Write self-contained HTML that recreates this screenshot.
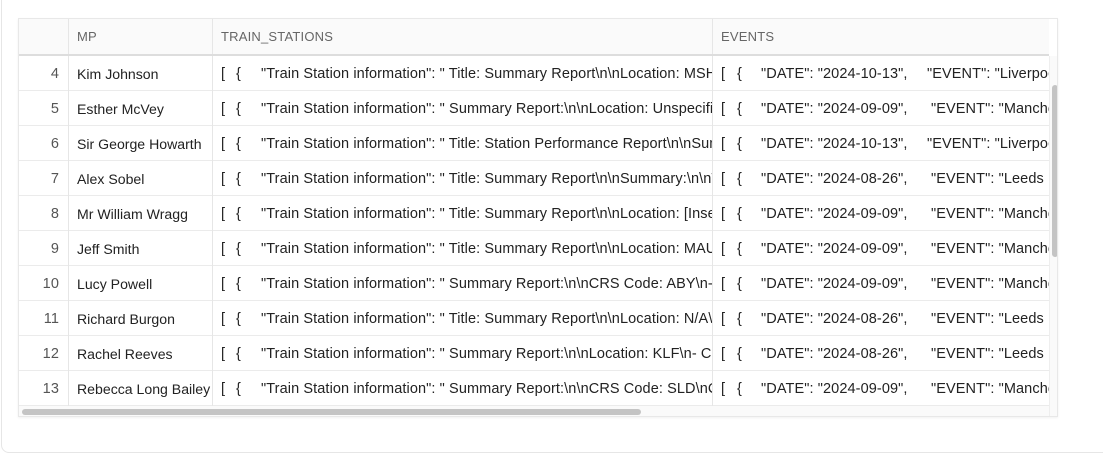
<!DOCTYPE html>
<html><head><meta charset="utf-8"><style>
*{margin:0;padding:0;box-sizing:border-box}
body{width:1103px;height:455px;background:#fff;position:relative;overflow:hidden;font-family:"Liberation Sans",Arial,sans-serif;font-size:14.5px;letter-spacing:0.1px;color:#222}
.outer{position:absolute;left:1px;top:-10px;width:1110px;height:463px;border:1px solid #e6e6e6;border-radius:8px}
.tbl{position:absolute;left:18px;top:18px;width:1040px;height:399px;border:1px solid #e8e8e8;box-shadow:0 1px 2px rgba(0,0,0,.06);overflow:hidden;background:#fff}
.hdr{position:absolute;left:0;top:0;width:1030px;height:37px;background:#fafafa;border-bottom:2px solid #ddd;color:#666;font-size:13px;letter-spacing:0.2px}
.hdr div{position:absolute;top:0;height:35px;line-height:36px;border-right:1px solid #e6e6e6;padding-left:8px}
.row{position:absolute;left:0;width:1030px;height:35px;border-bottom:1px solid #ebebeb;line-height:37px;white-space:nowrap}
.c{position:absolute;top:0;height:35px;overflow:hidden;border-right:1px solid #e6e6e6}
.i{left:0;width:50px;text-align:right;padding-right:9px;color:#555}
.m{left:50px;width:144px;padding-left:8px;letter-spacing:0;font-size:14.1px}
.t{left:194px;width:500px}
.e{left:694px;width:336px;border-right:none}
.s{position:absolute;top:0}
.hs{position:absolute;left:0;top:387px;width:1030px;height:11px;background:#fafafa}
.hs div{position:absolute;left:3px;top:3px;width:619px;height:6px;border-radius:3px;background:#c4c4c4}
.vs{position:absolute;left:1030px;top:37px;width:10px;height:362px;background:#fafafa;border-left:1px solid #eee}
.vs div{position:absolute;left:2px;top:29px;width:6px;height:172px;border-radius:3px;background:#c4c4c4}
</style></head><body>
<div class="outer"></div>
<div class="tbl">
<div class="hdr"><div style="left:0;width:50px"></div><div style="left:50px;width:144px">MP</div><div style="left:194px;width:500px">TRAIN_STATIONS</div><div style="left:694px;width:336px;border:none">EVENTS</div></div>

<div class="row" style="top:37px"><div class="c i">4</div><div class="c m">Kim Johnson</div><div class="c t"><span class="s" style="left:8px">[</span><span class="s" style="left:23px">{</span><span class="s" style="left:48px">"Train Station information": " Title: Summary Report\n\nLocation: MSH</span></div><div class="c e"><span class="s" style="left:8px">[</span><span class="s" style="left:24px">{</span><span class="s" style="left:48px">"DATE": "2024-10-13",</span><span class="s" style="left:214px">"EVENT": "Liverpool</span></div></div>
<div class="row" style="top:72px"><div class="c i">5</div><div class="c m">Esther McVey</div><div class="c t"><span class="s" style="left:8px">[</span><span class="s" style="left:23px">{</span><span class="s" style="left:48px">"Train Station information": " Summary Report:\n\nLocation: Unspecified</span></div><div class="c e"><span class="s" style="left:8px">[</span><span class="s" style="left:24px">{</span><span class="s" style="left:48px">"DATE": "2024-09-09",</span><span class="s" style="left:218px">"EVENT": "Manchester</span></div></div>
<div class="row" style="top:107px"><div class="c i">6</div><div class="c m">Sir George Howarth</div><div class="c t"><span class="s" style="left:8px">[</span><span class="s" style="left:23px">{</span><span class="s" style="left:48px">"Train Station information": " Title: Station Performance Report\n\nSummary</span></div><div class="c e"><span class="s" style="left:8px">[</span><span class="s" style="left:24px">{</span><span class="s" style="left:48px">"DATE": "2024-10-13",</span><span class="s" style="left:214px">"EVENT": "Liverpool</span></div></div>
<div class="row" style="top:142px"><div class="c i">7</div><div class="c m">Alex Sobel</div><div class="c t"><span class="s" style="left:8px">[</span><span class="s" style="left:23px">{</span><span class="s" style="left:48px">"Train Station information": " Title: Summary Report\n\nSummary:\n\nThe</span></div><div class="c e"><span class="s" style="left:8px">[</span><span class="s" style="left:24px">{</span><span class="s" style="left:48px">"DATE": "2024-08-26",</span><span class="s" style="left:218px">"EVENT": "Leeds</span></div></div>
<div class="row" style="top:177px"><div class="c i">8</div><div class="c m">Mr William Wragg</div><div class="c t"><span class="s" style="left:8px">[</span><span class="s" style="left:23px">{</span><span class="s" style="left:48px">"Train Station information": " Title: Summary Report\n\nLocation: [Insert</span></div><div class="c e"><span class="s" style="left:8px">[</span><span class="s" style="left:24px">{</span><span class="s" style="left:48px">"DATE": "2024-09-09",</span><span class="s" style="left:218px">"EVENT": "Manchester</span></div></div>
<div class="row" style="top:212px"><div class="c i">9</div><div class="c m">Jeff Smith</div><div class="c t"><span class="s" style="left:8px">[</span><span class="s" style="left:23px">{</span><span class="s" style="left:48px">"Train Station information": " Title: Summary Report\n\nLocation: MAU</span></div><div class="c e"><span class="s" style="left:8px">[</span><span class="s" style="left:24px">{</span><span class="s" style="left:48px">"DATE": "2024-09-09",</span><span class="s" style="left:218px">"EVENT": "Manchester</span></div></div>
<div class="row" style="top:247px"><div class="c i">10</div><div class="c m">Lucy Powell</div><div class="c t"><span class="s" style="left:8px">[</span><span class="s" style="left:23px">{</span><span class="s" style="left:48px">"Train Station information": " Summary Report:\n\nCRS Code: ABY\n- C</span></div><div class="c e"><span class="s" style="left:8px">[</span><span class="s" style="left:24px">{</span><span class="s" style="left:48px">"DATE": "2024-09-09",</span><span class="s" style="left:218px">"EVENT": "Manchester</span></div></div>
<div class="row" style="top:282px"><div class="c i">11</div><div class="c m">Richard Burgon</div><div class="c t"><span class="s" style="left:8px">[</span><span class="s" style="left:23px">{</span><span class="s" style="left:48px">"Train Station information": " Title: Summary Report\n\nLocation: N/A\n</span></div><div class="c e"><span class="s" style="left:8px">[</span><span class="s" style="left:24px">{</span><span class="s" style="left:48px">"DATE": "2024-08-26",</span><span class="s" style="left:218px">"EVENT": "Leeds</span></div></div>
<div class="row" style="top:317px"><div class="c i">12</div><div class="c m">Rachel Reeves</div><div class="c t"><span class="s" style="left:8px">[</span><span class="s" style="left:23px">{</span><span class="s" style="left:48px">"Train Station information": " Summary Report:\n\nLocation: KLF\n- Ca</span></div><div class="c e"><span class="s" style="left:8px">[</span><span class="s" style="left:24px">{</span><span class="s" style="left:48px">"DATE": "2024-08-26",</span><span class="s" style="left:218px">"EVENT": "Leeds</span></div></div>
<div class="row" style="top:352px"><div class="c i">13</div><div class="c m">Rebecca Long Bailey</div><div class="c t"><span class="s" style="left:8px">[</span><span class="s" style="left:23px">{</span><span class="s" style="left:48px">"Train Station information": " Summary Report:\n\nCRS Code: SLD\nCat</span></div><div class="c e"><span class="s" style="left:8px">[</span><span class="s" style="left:24px">{</span><span class="s" style="left:48px">"DATE": "2024-09-09",</span><span class="s" style="left:218px">"EVENT": "Manchester</span></div></div>

<div class="hs"><div></div></div>
<div class="vs"><div></div></div>
</div>
</body></html>
